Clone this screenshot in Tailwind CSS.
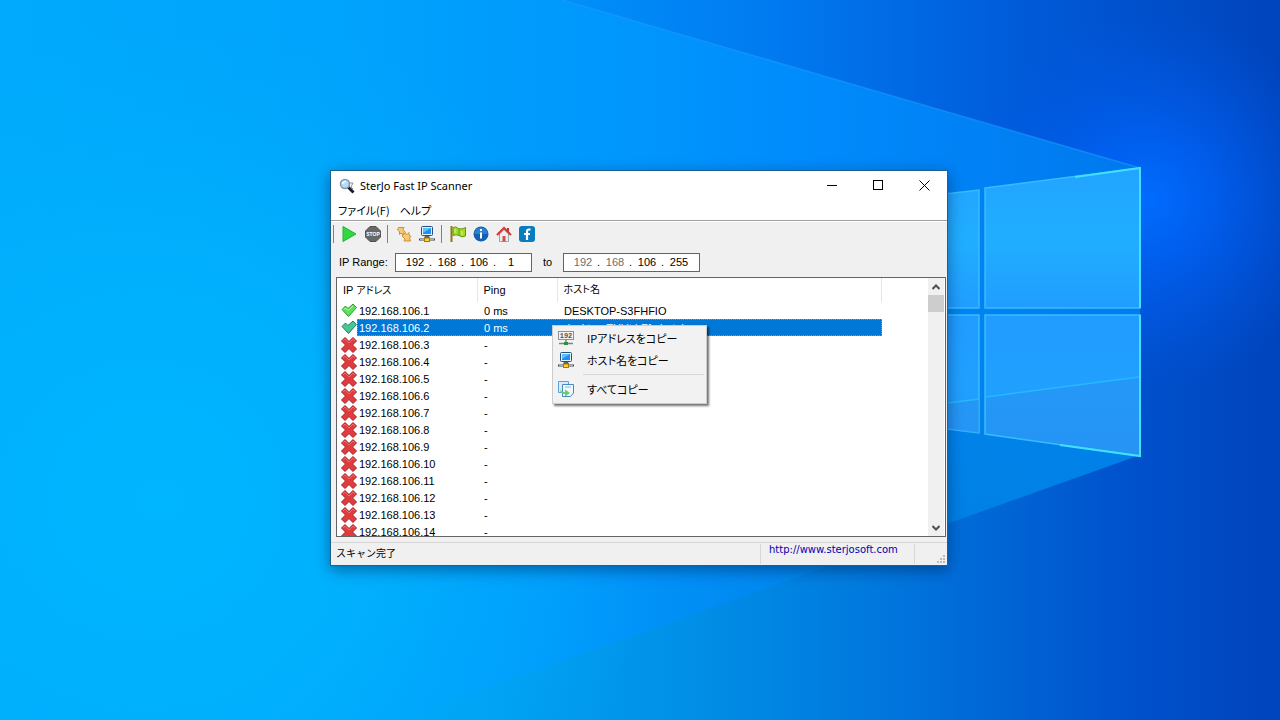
<!DOCTYPE html>
<html lang="ja">
<head>
<meta charset="utf-8">
<meta name="viewport" content="width=device-width, initial-scale=1">
<title>SterJo Fast IP Scanner</title>
<script src="https://cdn.jsdelivr.net/npm/@tailwindcss/browser@4"></script>
</head>
<body class="relative min-h-screen overflow-hidden bg-[#0090f8] font-['Liberation_Sans','Noto_Sans_CJK_JP',sans-serif] text-[11px] leading-4 text-black">

<!-- Wallpaper -->
<svg class="absolute inset-0 h-full w-full" viewBox="0 0 1280 720" preserveAspectRatio="xMidYMid slice" aria-hidden="true">
  <defs>
    <linearGradient id="base" x1="0" y1="0" x2="1280" y2="0" gradientUnits="userSpaceOnUse">
      <stop offset="0" stop-color="#00aafc"/><stop offset=".25" stop-color="#00a4fc"/><stop offset=".5" stop-color="#0096fc"/><stop offset=".62" stop-color="#008cfc"/><stop offset=".78" stop-color="#0080f4"/><stop offset="1" stop-color="#0070e8"/>
    </linearGradient>
    <linearGradient id="upper" x1="560" y1="0" x2="1280" y2="0" gradientUnits="userSpaceOnUse">
      <stop offset="0" stop-color="#0090fa"/><stop offset=".3" stop-color="#007af0"/><stop offset=".6" stop-color="#005edc"/><stop offset=".805" stop-color="#0050cc"/><stop offset="1" stop-color="#0044bc"/>
    </linearGradient>
    <linearGradient id="lower" x1="200" y1="0" x2="1140" y2="0" gradientUnits="userSpaceOnUse">
      <stop offset="0" stop-color="#00acf6" stop-opacity="0"/><stop offset=".3" stop-color="#00a0f0" stop-opacity=".8"/><stop offset=".5" stop-color="#0092e8"/><stop offset=".75" stop-color="#0074dc"/><stop offset="1" stop-color="#0050cc"/>
    </linearGradient>
    <radialGradient id="shade" cx="980" cy="600" r="420" gradientUnits="userSpaceOnUse">
      <stop offset="0" stop-color="#007ee0"/><stop offset=".3" stop-color="#0082e4" stop-opacity=".85"/><stop offset="1" stop-color="#008cee" stop-opacity="0"/>
    </radialGradient>
    <radialGradient id="glow" cx="1150" cy="200" r="190" gradientUnits="userSpaceOnUse">
      <stop offset="0" stop-color="#006cff"/><stop offset=".35" stop-color="#0064fa" stop-opacity=".7"/><stop offset="1" stop-color="#0058e8" stop-opacity="0"/>
    </radialGradient>
    <radialGradient id="left" cx="160" cy="500" r="500" gradientUnits="userSpaceOnUse">
      <stop offset="0" stop-color="#00b6ff"/><stop offset=".4" stop-color="#00b4fe" stop-opacity=".8"/><stop offset="1" stop-color="#00acfa" stop-opacity="0"/>
    </radialGradient>
    <linearGradient id="pane" x1="0" y1="170" x2="0" y2="455" gradientUnits="userSpaceOnUse">
      <stop offset="0" stop-color="#22a4ff"/><stop offset=".25" stop-color="#20aeff"/><stop offset=".5" stop-color="#209cff"/><stop offset=".75" stop-color="#20a0ff"/><stop offset="1" stop-color="#2498fa"/>
    </linearGradient>
  </defs>
  <rect width="1280" height="720" fill="url(#base)"/>
  <rect width="1280" height="720" fill="url(#shade)"/>
  <path d="M1140 455L200 790H1140Z" fill="url(#lower)"/>
  <path d="M560 0H1280V720H1140V168Z" fill="url(#upper)"/>
  <rect width="1280" height="720" fill="url(#left)"/>
  <path d="M940 -20H1340V400H1140V168L940 110Z" fill="url(#glow)"/>
  <path d="M562 0L1140 168" stroke="#20a0ff" stroke-width="1.5" opacity=".55"/>
  <g fill="url(#pane)" stroke="#38bcff" stroke-width="1.500">
    <path d="M900 199L979 190V308H900Z"/>
    <path d="M985 188L1140 168V308H985Z"/>
    <path d="M900 315H979V433L900 423Z"/>
    <path d="M985 315H1140V456L985 434Z"/>
  </g>
  <path d="M940 404L979 399V433L940 428ZM986 397L1139 377V455L986 433Z" fill="#2890f0" opacity=".5"/>
  <path d="M940 404L979 399M986 397L1139 377" stroke="#28b8ff" stroke-width="1.500"/>
  <path d="M1075 177L1140 168V308M1140 315V456L1060 445" fill="none" stroke="#40e0ff" stroke-width="2"/>
</svg>

<!-- Shared icons -->
<svg class="hidden" aria-hidden="true">
  <symbol id="ok" viewBox="0 0 16 16"><path d="M1 6.500L4.500 3L7 5.500L12 1L15.500 4.500L7.500 13.500Z" fill="#5ee05a" stroke="#2b9a35" stroke-linejoin="round"/><path d="M3 6.500L4.500 5L7 7.500L12 3" fill="none" stroke="#b6f8ae"/></symbol>
  <pattern id="dither" width="2" height="2" patternUnits="userSpaceOnUse"><path d="M0 0h1v1H0zM1 1h1v1H1z" fill="#0078d7"/></pattern>
  <symbol id="oksel" viewBox="0 0 16 16"><path d="M1 6.500L4.500 3L7 5.500L12 1L15.500 4.500L7.500 13.500Z" fill="#48c890" stroke="#148070" stroke-linejoin="round"/><path d="M1 6.500L4.500 3L7 5.500L12 1L15.500 4.500L7.500 13.500Z" fill="url(#dither)" opacity=".7"/></symbol>
  <symbol id="bad" viewBox="0 0 16 16"><path d="M4 .5L8 4.500L12 .5L15.500 4L11.500 8L15.500 12L12 15.500L8 11.500L4 15.500L.5 12L4.500 8L.5 4Z" fill="#e03c40" stroke="#a8181c" stroke-linejoin="round"/><path d="M2 4L4 2L8 6L12 2L14 4" fill="none" stroke="#f06c6c"/></symbol>
  <symbol id="pc" viewBox="0 0 16 16"><rect x="2.500" y=".5" width="11" height="9" rx="1" fill="#e8eef4" stroke="#28507c"/><rect x="4" y="2" width="8" height="6" fill="#1e90f0"/><path d="M4 2H12L4 7Z" fill="#58c0ff"/><path d="M6 10H10L11 12H5Z" fill="#4c6078"/><path d="M0 13.500H16" stroke="#3c4854" stroke-width="2"/><path d="M1 13.500H15" stroke="#d8b040"/><rect x="5.500" y="12" width="5" height="3.500" fill="#ffd030" stroke="#a87800"/></symbol>
</svg>

<main class="absolute left-[330px] top-[170px] flex w-[618px] flex-col border border-[#1b6191] bg-[#f0f0f0] shadow-[0_4px_14px_rgba(0,20,60,0.45)]">
  <!-- Title bar -->
  <header class="flex h-[29px] items-center bg-white pl-2">
    <svg class="mr-[5px] h-4 w-4" viewBox="0 0 16 16" aria-hidden="true"><path d="M9 9L14.500 14.500" stroke="#181c28" stroke-width="3"/><path d="M10 5H14L12 9L14 11" fill="none" stroke="#8c949c"/><circle cx="6" cy="6" r="4.500" fill="#b4dcf8" stroke="#8494a8" stroke-width="1.500"/><path d="M3.500 6A3 3 0 0 1 7 3.500" fill="none" stroke="#fff" stroke-width="1.500"/></svg>
    <h1 class="flex-1 font-['Noto_Sans','Noto_Sans_CJK_JP',sans-serif] text-[11px]">SterJo Fast IP Scanner</h1>
    <button class="flex h-full w-[45px] items-center justify-center" aria-label="最小化"><svg class="h-[11px] w-[11px]" viewBox="0 0 11 11"><path d="M0 5.500H10" stroke="#000"/></svg></button>
    <button class="flex h-full w-[46px] items-center justify-center" aria-label="最大化"><svg class="h-[11px] w-[11px]" viewBox="0 0 11 11"><rect x=".5" y=".5" width="9" height="9" fill="none" stroke="#000"/></svg></button>
    <button class="flex h-full w-[46px] items-center justify-center" aria-label="閉じる"><svg class="h-[11px] w-[11px]" viewBox="0 0 11 11"><path d="M.5 .5L10.500 10.500M10.500 .5L.5 10.500" stroke="#000"/></svg></button>
  </header>
  <!-- Menu bar -->
  <nav class="flex h-[21px] items-center gap-[10px] border-b border-[#a0a0a0] bg-white pl-[7px] font-['Noto_Sans_CJK_JP',sans-serif] text-[11px] [font-feature-settings:'palt']">
    <button>ファイル(F)</button><button>ヘルプ</button>
  </nav>
  <!-- Toolbar -->
  <div class="flex h-[26px] items-center border-t border-white pb-[2px] pl-[2px]" role="toolbar">
    <span class="mr-[7px] h-[18px] w-px bg-[#808080]"></span>
    <button class="mr-2" aria-label="開始"><svg class="h-4 w-4" viewBox="0 0 16 16"><path d="M2 .5L15 8L2 15.500Z" fill="#32d840" stroke="#28b034"/></svg></button>
    <button class="mr-[6px]" aria-label="停止"><svg class="h-4 w-4" viewBox="0 0 16 16"><path d="M5 .5H11L15.500 5V11L11 15.500H5L.5 11V5Z" fill="#686868" stroke="#505050"/><text x="8" y="10" text-anchor="middle" font-family="Liberation Sans" font-weight="bold" font-size="5" fill="#fff">STOP</text></svg></button>
    <span class="mr-2 h-[18px] w-px bg-[#808080]"></span>
    <button class="mr-[7px]" aria-label="コピー"><svg class="h-4 w-4" viewBox="0 0 16 16"><path d="M2.500 1.500H8L7 3.500L9.500 6.500L7 9L5 7L3.500 8.500V5.500L1.500 4ZM7.500 7L11 8.500L13 6.500V9L15 10.500L13.500 12L14.500 15H8L9 13L6 10Z" fill="#f8c878" stroke="#cc9038" stroke-linejoin="round"/></svg></button>
    <button class="mr-[6px]" aria-label="ホスト名"><svg class="h-4 w-4"><use href="#pc"/></svg></button>
    <span class="mr-2 h-[18px] w-px bg-[#808080]"></span>
    <button class="mr-[7px]" aria-label="旗"><svg class="h-4 w-4" viewBox="0 0 16 16"><path d="M1.500 0V16" stroke="#9a7418" stroke-width="2"/><path d="M3 1.500Q6 0 8.500 2.500Q12 4 15.500 1.500V10Q12 12 9 9.500Q6 8 3 9.500Z" fill="#a4dc28" stroke="#60980c"/><path d="M9 3V9" stroke="#60980c"/><path d="M5 3V7M12 5V9" stroke="#d4f870"/></svg></button>
    <button class="mr-[7px]" aria-label="情報"><svg class="h-4 w-4" viewBox="0 0 16 16"><circle cx="8" cy="8" r="7.500" fill="#1460b4"/><path d="M1.500 8A6.500 6.500 0 0 1 14.500 8Z" fill="#2c80d0"/><path d="M8 3V5M8 6.500V12.500" stroke="#fff" stroke-width="2" fill="none"/></svg></button>
    <button class="mr-[7px]" aria-label="ホーム"><svg class="h-4 w-4" viewBox="0 0 16 16"><path d="M11 2H13V6H11Z" fill="#c83030"/><path d="M3.500 8V15.500H12.500V8L8 3.500Z" fill="#e8f0f4" stroke="#98a4ac"/><path d="M1 9L8 2L15 9" fill="none" stroke="#dc3434" stroke-width="2"/><path d="M6.500 10H9.500V15.500H6.500Z" fill="#d84c40"/></svg></button>
    <button aria-label="Facebook"><svg class="h-4 w-4" viewBox="0 0 16 16"><rect width="16" height="16" rx="3" fill="#087cc0"/><path d="M11.500 3.500H10Q8 3.500 8 5.500V14M5 8H11" fill="none" stroke="#fff" stroke-width="2.200"/></svg></button>
  </div>
  <!-- Address range -->
  <div class="flex h-[30px] items-center pl-2">
    <span class="w-[56px]">IP Range:</span>
    <fieldset class="flex h-[19px] w-[137px] items-center border border-[#646464] bg-white pl-[5px]" aria-label="開始IPアドレス">
      <input class="w-7 text-center" aria-label="開始 1" value="192"><span class="w-1">.</span><input class="w-7 text-center" aria-label="開始 2" value="168"><span class="w-1">.</span><input class="w-7 text-center" aria-label="開始 3" value="106"><span class="w-1">.</span><input class="w-7 text-center" aria-label="開始 4" value="1">
    </fieldset>
    <span class="w-[31px] text-center">to</span>
    <fieldset class="flex h-[19px] w-[137px] items-center border border-[#646464] bg-white pl-[5px]" aria-label="終了IPアドレス">
      <input class="w-7 text-center text-[#6d6d6d]" aria-label="終了 1" value="192" disabled><span class="w-1">.</span><input class="w-7 text-center text-[#6d6d6d]" aria-label="終了 2" value="168" disabled><span class="w-1">.</span><input class="w-7 text-center" aria-label="終了 3" value="106"><span class="w-1">.</span><input class="w-7 text-center" aria-label="終了 4" value="255">
    </fieldset>
  </div>
  <!-- Host list -->
  <section class="ml-[5px] mr-px flex h-[260px] overflow-hidden border border-[#646464] bg-white">
    <div class="flex-1 overflow-hidden">
      <table class="w-[545px] table-fixed border-collapse">
        <colgroup><col class="w-[20px]"><col class="w-[120px]"><col class="w-[80px]"><col></colgroup>
        <thead><tr class="h-6 text-left">
          <th colspan="2" class="border-r border-[#e5e5e5] p-0 pl-[6px] font-normal [font-feature-settings:'palt']">IP <span class="text-[10px]">アドレス</span></th>
          <th class="border-r border-[#e5e5e5] p-0 pl-[6px] font-normal">Ping</th>
          <th class="border-r border-[#e5e5e5] p-0 pl-[6px] text-[10px] font-normal [font-feature-settings:'palt']">ホスト名</th>
        </tr></thead>
        <tbody id="hosts"></tbody>
      </table>
    </div>
    <div class="mr-px flex w-4 flex-col items-center bg-[#f0f0f0]">
      <button class="flex h-[17px] w-full items-center justify-center" aria-label="上へ"><svg class="h-2 w-2" viewBox="0 0 8 8"><path d="M.5 6L4 2.500L7.500 6" fill="none" stroke="#505050" stroke-width="2"/></svg></button>
      <div class="h-[17px] w-full bg-[#cdcdcd]"></div>
      <div class="flex-1"></div>
      <button class="flex h-[17px] w-full items-center justify-center" aria-label="下へ"><svg class="h-2 w-2" viewBox="0 0 8 8"><path d="M.5 2L4 5.500L7.500 2" fill="none" stroke="#505050" stroke-width="2"/></svg></button>
    </div>
  </section>
  <!-- Status bar -->
  <footer class="mt-[5px] flex h-[23px] border-t border-[#d7d7d7] pl-[5px]">
    <span class="flex-1 pt-[3px] text-[10px]">スキャン完了</span>
    <div class="my-px w-[155px] border-x border-[#d7d7d7] pl-2"><a href="http://www.sterjosoft.com" class="block font-['DejaVu_Sans',sans-serif] text-[10px] leading-3 text-[#0000b0]">http://www.sterjosoft.com</a></div>
    <div class="flex w-8 items-end justify-end p-px"><svg class="h-[9px] w-[9px]" viewBox="0 0 9 9" aria-hidden="true"><path d="M6 0h2v2H6zM3 3h2v2H3zM6 3h2v2H6zM0 6h2v2H0zM3 6h2v2H3zM6 6h2v2H6z" fill="#bababa"/></svg></div>
  </footer>
</main>

<!-- Context menu -->
<div role="menu" class="absolute left-[552px] top-[325px] flex w-[155px] flex-col border border-[#ccc] bg-[#f2f2f2] pb-[3px] pt-px font-['Noto_Sans_CJK_JP',sans-serif] text-[11px] shadow-[2px_2px_2px_rgba(0,0,0,0.55)] [font-feature-settings:'palt']">
  <button role="menuitem" class="flex h-[22px] items-center gap-[13px] pl-[5px]"><svg class="h-4 w-4" viewBox="0 0 16 16"><rect x=".5" y="1.500" width="15" height="8" fill="#f4f4f4" stroke="#909090"/><text x="8" y="8" text-anchor="middle" font-family="Liberation Mono" font-weight="bold" font-size="7" fill="#505050">192</text><path d="M8 10V13M1 13.500H15" stroke="#78887c" stroke-width="1.500"/><rect x="6" y="12" width="4" height="3" fill="#289040"/></svg>IPアドレスをコピー</button>
  <button role="menuitem" class="flex h-[22px] items-center gap-[13px] pl-[5px]"><svg class="h-4 w-4"><use href="#pc"/></svg>ホスト名をコピー</button>
  <hr class="my-[3px] ml-[30px] mr-[2px] border-[#d7d7d7]">
  <button role="menuitem" class="flex h-[22px] items-center gap-[13px] pl-[5px]"><svg class="h-4 w-4" viewBox="0 0 16 16"><path d="M.5 .5H10.500V11.500H.5Z" fill="#d8ecfc" stroke="#60a0d4"/><path d="M4.500 3.500H15.500V12L12.500 15.500H4.500Z" fill="#f0f8ff" stroke="#4888c0"/><path d="M7 6H13" stroke="#88b8dc"/><path d="M2 8Q3 11 7 11V8.500L12 12L7 15.500V13Q2 13 2 8Z" fill="#68cc68"/></svg>すべてコピー</button>
</div>

<script>
const hosts = Array.from({ length: 14 }, (_, i) => ({
  ip: `192.168.106.${i + 1}`,
  ping: i < 2 ? '0 ms' : '-',
  name: ['DESKTOP-S3FHFIO', 'desktop-THkit.hFfmhotel'][i] || '',
  icon: ['ok', 'oksel'][i] || 'bad',
}));
document.getElementById('hosts').innerHTML = hosts.map((h, i) => `
  <tr class="h-[17px]">
    <td class="p-0 pl-1"><svg class="block h-4 w-4"><use href="#${h.icon}"/></svg></td>
    <td colspan="3" class="p-0">
      <div class="${i === 1 ? 'flex h-[17px] items-center border border-dotted border-[#d08840] bg-[#0078d7] text-white' : 'flex h-[17px] items-center border border-transparent'}">
        <span class="w-[126px] pl-px">${h.ip}</span><span class="w-[80px]">${h.ping}</span><span>${h.name}</span>
      </div>
    </td>
  </tr>`).join('');
</script>
</body>
</html>
